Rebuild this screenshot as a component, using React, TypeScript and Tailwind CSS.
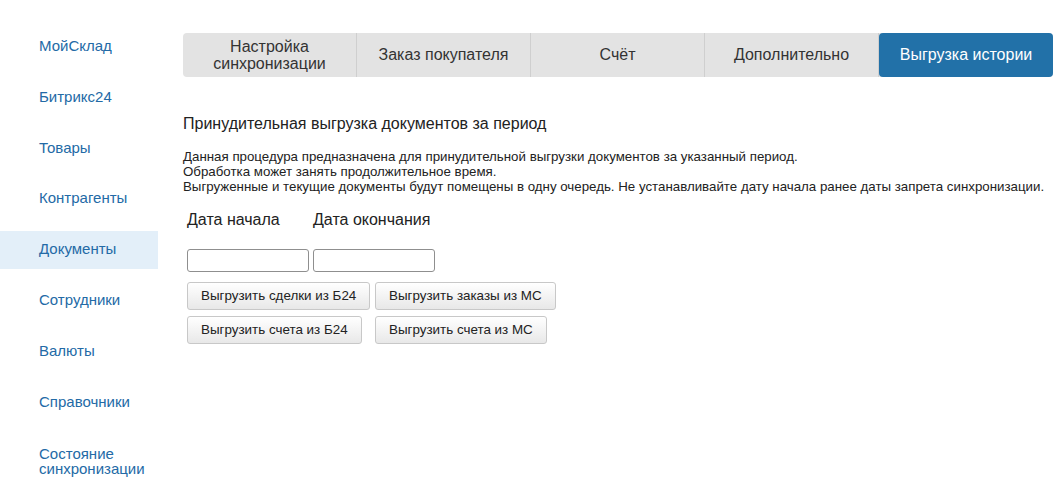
import React from "react";

const side = [
  "МойСклад",
  "Битрикс24",
  "Товары",
  "Контрагенты",
  "Документы",
  "Сотрудники",
  "Валюты",
  "Справочники",
];

const tabs = ["Заказ покупателя", "Счёт", "Дополнительно"];

function Btn({ children }: { children: React.ReactNode }) {
  return (
    <button className="h-[28px] px-[13px] rounded-[3px] border border-[#c8c8c8] bg-gradient-to-b from-white to-[#e8e8e8] text-[13.4px] text-[#222] leading-none whitespace-nowrap">
      {children}
    </button>
  );
}

export default function App() {
  return (
    <div
      className="w-[1057px] h-[483px] bg-white flex overflow-hidden"
      style={{ fontFamily: '"Liberation Sans", Arial, sans-serif' }}
    >
      <nav className="w-[158px] shrink-0 pt-[27px] flex flex-col gap-[12.9px]">
        {side.map((s) => (
          <div
            key={s}
            className={`h-[38px] flex items-center pl-[39px] text-[15px] text-[#236aa6] ${
              s === "Документы" ? "bg-[#e3eff9]" : ""
            }`}
          >
            {s}
          </div>
        ))}
        <div className="pl-[39px] text-[15px] leading-[15px] text-[#236aa6] pt-[12px]">
          Состояние
          <br />
          синхронизации
        </div>
      </nav>
      <main className="flex-1 pl-[25px] pt-[33px] pr-[4px]">
        <div className="flex h-[44px] w-[870px] rounded-[4px] bg-[#e3e3e3] text-[16px] text-[#333]">
          <div className="w-[174px] flex items-center justify-center text-center leading-[17px] border-r border-[#cfcfcf]">
            Настройка
            <br />
            синхронизации
          </div>
          {tabs.map((t) => (
            <div
              key={t}
              className="w-[174px] flex items-center justify-center border-r border-[#cfcfcf] last:border-r-0"
            >
              {t}
            </div>
          ))}
          <div className="w-[174px] flex items-center justify-center rounded-[4px] bg-[#2271a8] text-white">
            Выгрузка истории
          </div>
        </div>

        <h2 className="mt-[38px] text-[16px] leading-[18px] text-[#222]">
          Принудительная выгрузка документов за период
        </h2>
        <p className="mt-[15.5px] text-[13.3px] leading-[15px] text-[#222] whitespace-nowrap">
          Данная процедура предназначена для принудительной выгрузки документов за указанный период.
          <br />
          Обработка может занять продолжительное время.
          <br />
          Выгруженные и текущие документы будут помещены в одну очередь. Не устанавливайте дату начала ранее даты запрета синхронизации.
        </p>

        <div className="ml-[4px] mt-[17.5px] flex gap-[4px] text-[16px] text-[#222] leading-[18px]">
          <div className="w-[122px]">Дата начала</div>
          <div>Дата окончания</div>
        </div>
        <div className="ml-[4px] mt-[20px] flex gap-[4px]">
          <input className="w-[122px] h-[23px] rounded-[3px] border border-[#8f8f8f] bg-white" />
          <input className="w-[122px] h-[23px] rounded-[3px] border border-[#8f8f8f] bg-white" />
        </div>
        <div className="ml-[4px] mt-[10px] grid grid-cols-[188px_auto] gap-y-[6px] justify-start">
          <div><Btn>Выгрузить сделки из Б24</Btn></div>
          <div><Btn>Выгрузить заказы из МС</Btn></div>
          <div><Btn>Выгрузить счета из Б24</Btn></div>
          <div><Btn>Выгрузить счета из МС</Btn></div>
        </div>
      </main>
    </div>
  );
}
